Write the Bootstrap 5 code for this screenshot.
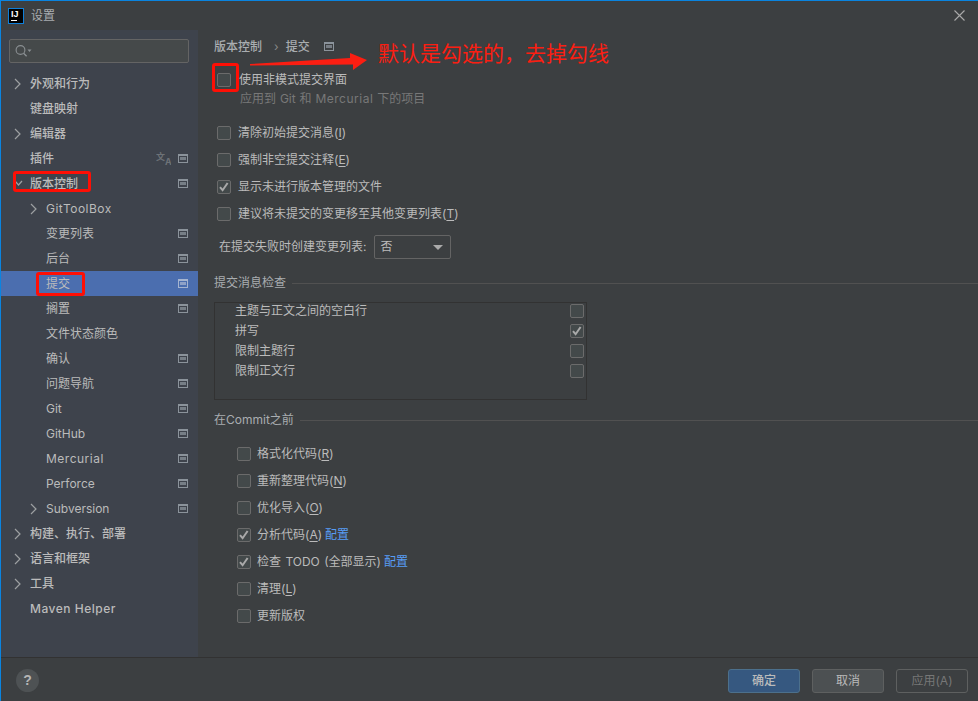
<!DOCTYPE html>
<html lang="zh">
<head>
<meta charset="utf-8">
<title>设置</title>
<link href="https://cdn.jsdelivr.net/npm/bootstrap@5.3.0/dist/css/bootstrap.min.css" rel="stylesheet">
<style>
html,body{height:100%;margin:0}
body{background:#3c3f41;color:#bbbbbb;font:12px/16px "Inter","Noto Sans CJK SC",sans-serif;overflow:hidden}
.win{position:relative;width:978px;height:701px;border-left:1px solid #0a84e0;border-top:1px solid #0a84e0;background:#3c3f41;display:flex;flex-direction:column}
.ttl{height:29px;flex:none;display:flex;align-items:center;padding-left:7px;background:#3c3f41;color:#a9adb0}
.logo{width:16px;height:16px;background:#000;border:1px solid #0f7fd8;color:#fff;font:bold 9px/9px "Liberation Sans",sans-serif;position:relative;padding:1px 0 0 2px;margin-right:7px;flex:none}
.logo::after{content:"";position:absolute;left:2px;bottom:2px;width:6px;height:1px;background:#fff}
.ttl-x{margin-left:auto;margin-right:12px;width:13px;height:13px}
.body-row{flex:1;display:flex;min-height:0}
.side{width:197px;flex:none;background:#3e434c;padding-top:9px}
.srch{margin:0 9px 8px 8px;height:24px;background:#45494a;border:1px solid #646464;border-radius:2px;display:flex;align-items:center;padding-left:5px}
.tree-i{height:25px;display:flex;align-items:center;padding-right:10px;color:#bbbbbb}
.tree-i.top{font-weight:500}
.tree-i.sel{background:#4b6eaf}
.ar{width:29px;flex:none;padding-left:13px;display:flex}
.ar2{width:45px;flex:none;padding-left:29px;display:flex}
.wide{letter-spacing:.5px}
.proj{width:10px;height:9px;border:1px solid #8b939b;border-top-width:2px;position:relative;flex:none;margin-left:auto}
.proj::after{content:"";position:absolute;left:1px;right:1px;top:1px;height:3px;background:#8b939b;opacity:.75}
.sel .proj{border-color:#a5b4cf}.sel .proj::after{background:#a5b4cf}
.tr-svg{margin-left:auto;margin-right:7px;flex:none}
.tr-svg + .proj{margin-left:0}
.pane{flex:1;padding:0 0 0 16px;min-width:0}
.crumb{height:30px;padding-top:3px;display:flex;align-items:center;font-weight:500;color:#a9adb0}
.crumb .sp{margin:0 7px 0 12px;font-weight:400;color:#888}
.crumb .proj{margin-left:14px}
.chk{appearance:none;-webkit-appearance:none;width:14px;height:14px;margin:0;flex:none;background:#43494a;border:1px solid #6b6b6b;border-radius:2px;display:block}
.chk:checked{background:#43494a url("data:image/svg+xml,%3Csvg xmlns='http://www.w3.org/2000/svg' viewBox='0 0 14 14'%3E%3Cpath d='M3 7.2l2.6 3L10.6 3' fill='none' stroke='%23a9a9a9' stroke-width='2'/%3E%3C/svg%3E") center/14px no-repeat}
.opt{height:27px;display:flex;align-items:center;padding-left:3px;gap:7px}
.hint{padding-left:26px;color:#787878;height:16px;line-height:16px;word-spacing:.5px}
.first{height:22px;margin-top:9px;gap:8px}
.gap12{margin-top:12px}
.u{text-decoration:underline;text-underline-offset:2px}
.sel-row{display:flex;align-items:center;padding-left:5px;height:24px;margin-top:8px;color:#bbb}
.cmb{width:77px;height:24px;margin-left:8px;border:1px solid #646464;border-radius:2px;padding-left:5px;display:flex;align-items:center;position:relative}
.cmb::after{content:"";position:absolute;right:7px;top:9px;border:5px solid transparent;border-top:5px solid #aaa;border-bottom:0}
.sect{display:flex;align-items:center;gap:6px;height:16px;color:#a9adb0}
.sect i{flex:1;border-top:1px solid #515151;display:block}
.lst{width:373px;height:98px;margin-top:11px;border:1px solid #323232;margin-bottom:12px}
.lst-r{height:20px;display:flex;align-items:center;justify-content:space-between;padding:0 2px 0 20px}
.lst-r span{margin-top:-4px}
.lst-r .chk{margin-top:-4px}
.b2 .opt{padding-left:23px;gap:6px}
.b2{margin-top:12px}
.sp2{word-spacing:1px}
.lnk{color:#589df6;margin-left:3px}
.foot{height:44px;flex:none;border-top:1px solid #323232;display:flex;align-items:center;padding:2px 10px 0 15px;background:#3c3f41}
.help{width:23px;height:23px;border-radius:50%;background:#4e5254;color:#b5b5b5;font:bold 14px/23px "Liberation Sans",sans-serif;text-align:center;flex:none}
.dbtn{width:72px;height:24px;border-radius:3px;padding:0;font-size:12px;line-height:16px;margin-left:12px;border:1px solid #5e6060;background:#4c5052;color:#bbb}
.dbtn:first-of-type{margin-left:auto}
.dbtn.go{background:#365880;border-color:#4c708c;color:#bbb;font-weight:500}
.dbtn.off{background:transparent;border-color:#5e6060;color:#777}
.mk{position:absolute;border:3px solid #fe0f05;border-radius:3px;pointer-events:none}
.mk-a{left:12px;top:170px;width:78px;height:21px}
.mk-b{left:35px;top:271px;width:49px;height:24px}
.mk-c{left:211px;top:62px;width:27px;height:29px}
.note{position:absolute;left:377px;top:40px;color:#fb1e12;font-size:21px;line-height:26px;white-space:nowrap}
.arw{position:absolute;left:249px;top:52px}
</style>
</head>
<body>
<div class="win">
  <div class="ttl">
    <div class="logo">IJ</div><span>设置</span>
    <svg class="ttl-x" viewBox="0 0 13 13"><path d="M1.5 1.5l10 10M11.5 1.5l-10 10" stroke="#aaa" stroke-width="1.1" fill="none"/></svg>
  </div>
  <div class="body-row">
    <nav class="side">
      <div class="srch"><svg width="20" height="14" viewBox="0 0 20 14"><circle cx="5.5" cy="6" r="4.4" fill="none" stroke="#8a8f92" stroke-width="1.1"/><path d="M8.6 9.2l3 3" stroke="#8a8f92" stroke-width="1.4"/><path d="M12.5 5.5h4l-2 2.5z" fill="#8a8f92"/></svg></div>
      <div class="tree-i top"><span class="ar"><svg width="7" height="12" viewBox="0 0 7 12"><path d="M1 1l5 5-5 5" fill="none" stroke="#9da0a2" stroke-width="1.2"/></svg></span>外观和行为</div>
      <div class="tree-i top"><span class="ar"></span>键盘映射</div>
      <div class="tree-i top"><span class="ar"><svg width="7" height="12" viewBox="0 0 7 12"><path d="M1 1l5 5-5 5" fill="none" stroke="#9da0a2" stroke-width="1.2"/></svg></span>编辑器</div>
      <div class="tree-i top"><span class="ar"></span>插件<svg class="tr-svg" width="15" height="15" viewBox="0 0 15 15" font-size="9" font-weight="700" fill="#6d7277"><text x="0" y="9">文</text><text x="9" y="14">A</text></svg><span class="proj"></span></div>
      <div class="tree-i top"><span class="ar"><svg width="9" height="7" viewBox="0 0 9 7"><path d="M1 1l3.5 4L8 1" fill="none" stroke="#9da0a2" stroke-width="1.2"/></svg></span>版本控制<span class="proj"></span></div>
      <div class="tree-i"><span class="ar2"><svg width="7" height="12" viewBox="0 0 7 12"><path d="M1 1l5 5-5 5" fill="none" stroke="#9da0a2" stroke-width="1.2"/></svg></span><span class="wide">GitToolBox</span></div>
      <div class="tree-i"><span class="ar2"></span>变更列表<span class="proj"></span></div>
      <div class="tree-i"><span class="ar2"></span>后台<span class="proj"></span></div>
      <div class="tree-i sel"><span class="ar2"></span>提交<span class="proj"></span></div>
      <div class="tree-i"><span class="ar2"></span>搁置<span class="proj"></span></div>
      <div class="tree-i"><span class="ar2"></span>文件状态颜色</div>
      <div class="tree-i"><span class="ar2"></span>确认<span class="proj"></span></div>
      <div class="tree-i"><span class="ar2"></span>问题导航<span class="proj"></span></div>
      <div class="tree-i"><span class="ar2"></span>Git<span class="proj"></span></div>
      <div class="tree-i"><span class="ar2"></span>GitHub<span class="proj"></span></div>
      <div class="tree-i"><span class="ar2"></span><span class="wide">Mercurial</span><span class="proj"></span></div>
      <div class="tree-i"><span class="ar2"></span>Perforce<span class="proj"></span></div>
      <div class="tree-i"><span class="ar2"><svg width="7" height="12" viewBox="0 0 7 12"><path d="M1 1l5 5-5 5" fill="none" stroke="#9da0a2" stroke-width="1.2"/></svg></span>Subversion<span class="proj"></span></div>
      <div class="tree-i top"><span class="ar"><svg width="7" height="12" viewBox="0 0 7 12"><path d="M1 1l5 5-5 5" fill="none" stroke="#9da0a2" stroke-width="1.2"/></svg></span>构建、执行、部署</div>
      <div class="tree-i top"><span class="ar"><svg width="7" height="12" viewBox="0 0 7 12"><path d="M1 1l5 5-5 5" fill="none" stroke="#9da0a2" stroke-width="1.2"/></svg></span>语言和框架</div>
      <div class="tree-i top"><span class="ar"><svg width="7" height="12" viewBox="0 0 7 12"><path d="M1 1l5 5-5 5" fill="none" stroke="#9da0a2" stroke-width="1.2"/></svg></span>工具</div>
      <div class="tree-i top"><span class="ar"></span><span class="wide">Maven Helper</span></div>
    </nav>
    <main class="pane">
      <div class="crumb">版本控制<span class="sp">›</span>提交<span class="proj"></span></div>
      <div class="opt first"><input class="chk" type="checkbox" aria-label="使用非模式提交界面"><span>使用非模式提交界面</span></div>
      <div class="hint">应用到 Git 和 <span class="wide">Mercurial</span> 下的项目</div>
      <div class="opt gap12"><input class="chk" type="checkbox" aria-label="清除"><span>清除初始提交消息(<span class="u">I</span>)</span></div>
      <div class="opt"><input class="chk" type="checkbox" aria-label="强制"><span>强制非空提交注释(<span class="u">E</span>)</span></div>
      <div class="opt"><input class="chk" type="checkbox" checked aria-label="显示"><span>显示未进行版本管理的文件</span></div>
      <div class="opt"><input class="chk" type="checkbox" aria-label="建议"><span>建议将未提交的变更移至其他变更列表(<span class="u">T</span>)</span></div>
      <div class="sel-row">在提交失败时创建变更列表:<div class="cmb">否</div></div>
      <div class="sect mt-3"><span>提交消息检查</span><i></i></div>
      <div class="lst">
        <div class="lst-r"><span>主题与正文之间的空白行</span><input class="chk" type="checkbox" aria-label="空白行"></div>
        <div class="lst-r"><span>拼写</span><input class="chk" type="checkbox" checked aria-label="拼写"></div>
        <div class="lst-r"><span>限制主题行</span><input class="chk" type="checkbox" aria-label="主题行"></div>
        <div class="lst-r"><span>限制正文行</span><input class="chk" type="checkbox" aria-label="正文行"></div>
      </div>
      <div class="sect"><span>在Commit之前</span><i></i></div>
      <div class="b2">
        <div class="opt"><input class="chk" type="checkbox" aria-label="格式化"><span>格式化代码(<span class="u">R</span>)</span></div>
        <div class="opt"><input class="chk" type="checkbox" aria-label="重新整理"><span>重新整理代码(<span class="u">N</span>)</span></div>
        <div class="opt"><input class="chk" type="checkbox" aria-label="优化"><span>优化导入(<span class="u">O</span>)</span></div>
        <div class="opt"><input class="chk" type="checkbox" checked aria-label="分析"><span>分析代码(<span class="u">A</span>)<span class="lnk">配置</span></span></div>
        <div class="opt"><input class="chk" type="checkbox" checked aria-label="检查"><span class="sp2">检查 TODO (全部显示)<span class="lnk">配置</span></span></div>
        <div class="opt"><input class="chk" type="checkbox" aria-label="清理"><span>清理(<span class="u">L</span>)</span></div>
        <div class="opt"><input class="chk" type="checkbox" aria-label="更新"><span>更新版权</span></div>
      </div>
    </main>
  </div>
  <div class="foot">
    <div class="help">?</div>
    <button class="btn dbtn go" type="button">确定</button>
    <button class="btn dbtn" type="button">取消</button>
    <button class="btn dbtn off" type="button">应用(A)</button>
  </div>
  <div class="mk mk-a"></div>
  <div class="mk mk-b"></div>
  <div class="mk mk-c"></div>
  <svg class="arw" width="130" height="26" viewBox="0 0 130 26"><path d="M0 11L100 5V0L117 7L103 17V11.5L0 12.5Z" fill="#fb1e12"/></svg>
  <div class="note">默认是勾选的，去掉勾线</div>
</div>
</body>
</html>
